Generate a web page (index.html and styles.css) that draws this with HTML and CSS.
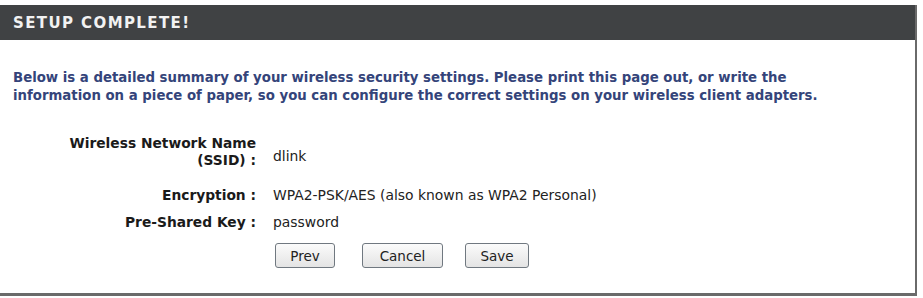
FILE: index.html
```html
<!DOCTYPE html>
<html>
<head>
<meta charset="utf-8">
<link rel="stylesheet" href="styles.css">
</head>
<body>
<div class="box">
  <div class="header">SETUP COMPLETE!</div>
  <div class="content">
    <p class="intro">Below is a detailed summary of your wireless security settings. Please print this page out, or write the information on a piece of paper, so you can configure the correct settings on your wireless client adapters.</p>
    <div class="grid">
      <div class="label first">Wireless Network Name (SSID) :</div>
      <div class="value">dlink</div>
      <div class="label">Encryption :</div>
      <div class="value">WPA2-PSK/AES (also known as WPA2 Personal)</div>
      <div class="label">Pre-Shared Key :</div>
      <div class="value">password</div>
      <div></div>
      <div class="buttons">
        <button class="btn btn-prev">Prev</button>
        <button class="btn btn-cancel">Cancel</button>
        <button class="btn btn-save">Save</button>
      </div>
    </div>
  </div>
</div>
</body>
</html>
```
FILE: styles.css
```css
html, body {
  margin: 0;
  padding: 0;
  background: #ffffff;
}
body {
  padding-top: 5px;
  font-family: "DejaVu Sans", Verdana, sans-serif;
}
.box {
  box-sizing: border-box;
  width: 917px;
  height: 291px;
  border-right: 2px solid #6a6a6a;
  border-bottom: 3px solid #6a6a6a;
}
.header {
  background: #404244;
  color: #f2f2f2;
  font-weight: bold;
  font-size: 15px;
  letter-spacing: 1.4px;
  height: 35px;
  line-height: 37px;
  padding-left: 13px;
}
.content {
  padding: 29px 0 0 13px;
}
.intro {
  margin: 0;
  width: 840px;
  color: #34447a;
  font-weight: bold;
  font-size: 13.3px;
  line-height: 18px;
}
.grid {
  display: grid;
  grid-template-columns: 243px auto;
  column-gap: 17px;
  row-gap: 10px;
  margin-top: 30px;
  align-items: center;
}
.label {
  text-align: right;
  font-weight: bold;
  font-size: 13.8px;
  color: #1a1a1a;
  line-height: 17px;
  padding-left: 50px;
}
.label.first {
  padding-bottom: 8px;
}
.value {
  font-size: 13.9px;
  line-height: 17px;
  color: #222;
}
.buttons {
  display: flex;
  margin-top: 2px;
  margin-left: 2px;
}
.btn {
  font-family: "DejaVu Sans", Verdana, sans-serif;
  font-size: 13.5px;
  color: #222;
  height: 25px;
  border: 1px solid #707880;
  border-radius: 3px;
  background: linear-gradient(#fbfbfb, #e4e4e4);
  padding: 0;
}
.btn-prev { width: 60px; margin-right: 27px; }
.btn-cancel { width: 81px; margin-right: 22px; }
.btn-save { width: 64px; }
```
